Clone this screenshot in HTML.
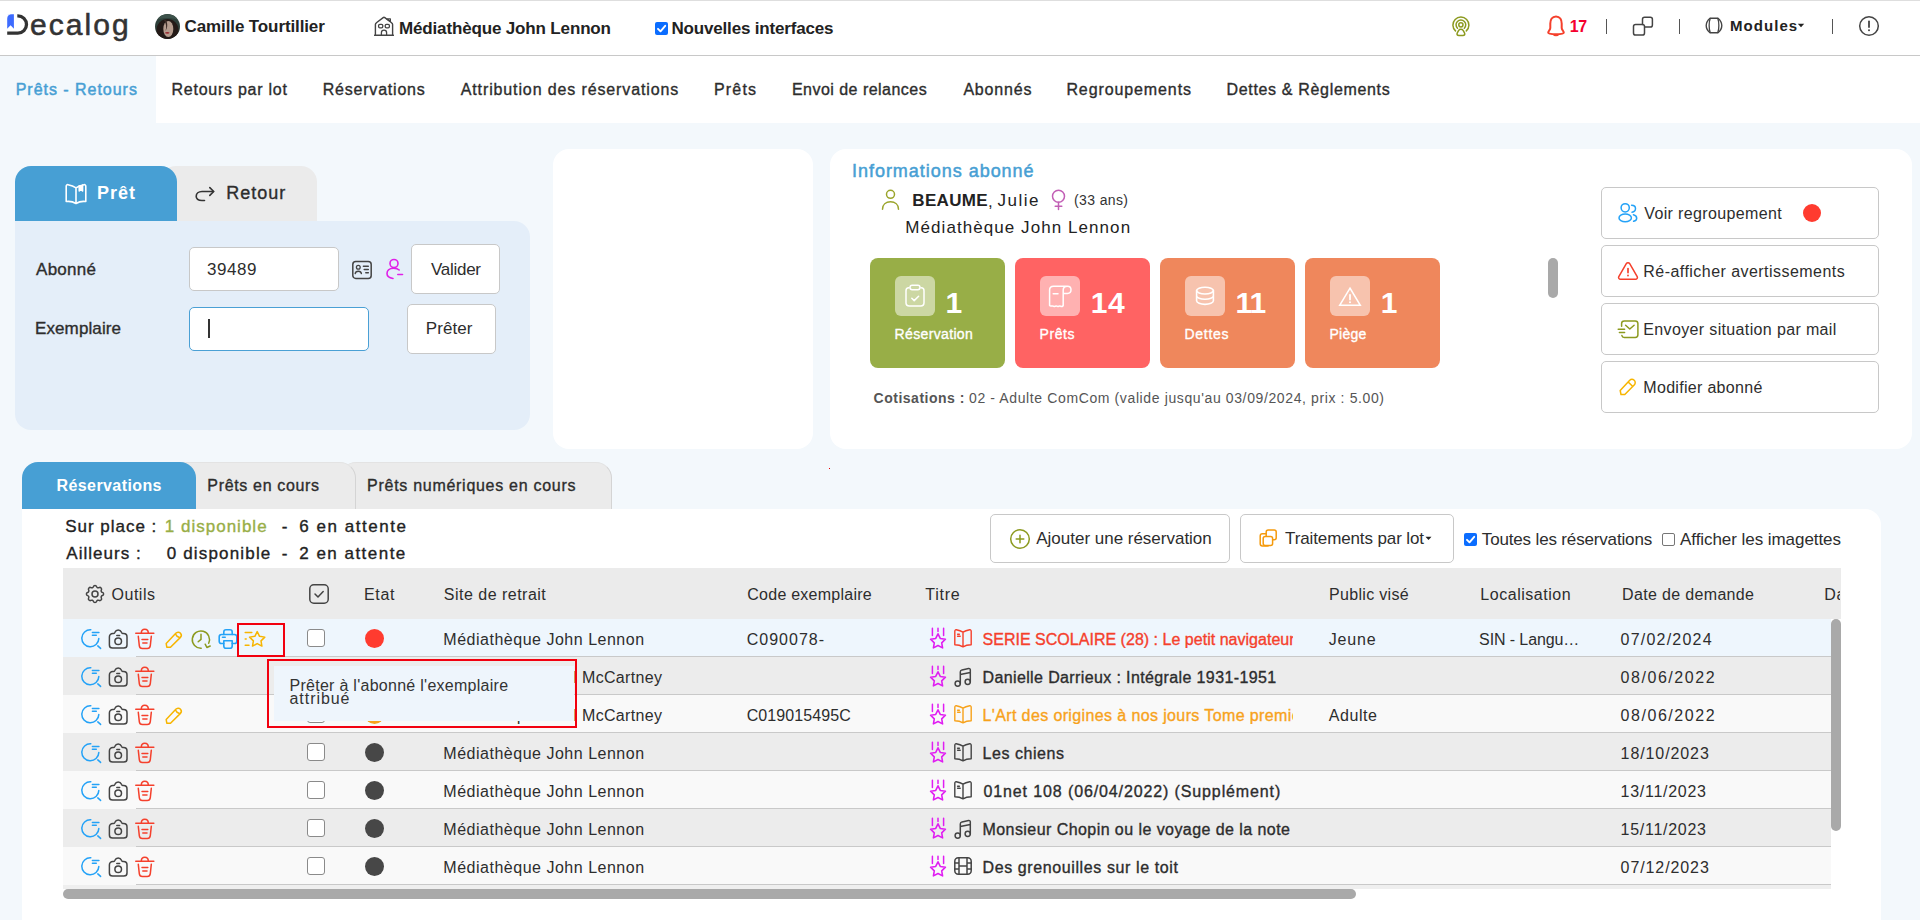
<!DOCTYPE html>
<html><head><meta charset="utf-8"><title>Decalog</title>
<style>
html,body{margin:0;padding:0;}
body{width:1920px;height:920px;overflow:hidden;position:relative;background:#f3f8fc;font-family:"Liberation Sans",sans-serif;}
.t{position:absolute;white-space:pre;}
.r{position:absolute;box-sizing:border-box;}
</style></head><body>
<div class='r' style='left:0px;top:0px;width:1920px;height:56px;background:#fff;z-index:1;'></div>
<div class='r' style='left:0px;top:0px;width:1920px;height:1px;background:#dedede;z-index:2;'></div>
<div class='r' style='left:0px;top:55px;width:1920px;height:1px;background:#c8c8c8;z-index:2;'></div>
<svg class='r' style='left:0px;top:8px;z-index:3;' width='40' height='32' viewBox='0 8 40 32' fill='none' stroke-linecap='round' stroke-linejoin='round'><path d='M7.2 14.2 C9.5 14.6 11.8 14.2 13.9 14.2 V28.7 L10.6 25.2 L7.2 28.7 V19.5 C7.2 17 7.8 15 10 14.5 Z' fill='#3d6bff' stroke='none'/><path d='M17.3 15.8 H17.85 A8.65 8.65 0 0 1 17.85 33.1 H7.2' stroke='#333' stroke-width='3.3' stroke-linecap='butt'/></svg>
<svg class='r' style='left:155px;top:14px;z-index:3;' width='25' height='25' viewBox='0 0 25 25' fill='none' stroke-linecap='round' stroke-linejoin='round'><defs><clipPath id='av'><circle cx='12.5' cy='12.5' r='12.5'/></clipPath></defs><g clip-path='url(#av)'><rect width='25' height='25' fill='#2e3f3a'/><ellipse cx='12.5' cy='16' rx='11' ry='11' fill='#241a17'/><ellipse cx='13.3' cy='15' rx='5' ry='8' fill='#b59c8e'/><path d='M9 6 C11 9 12 13 10.5 17 C12.5 14 13 10 11 6 Z' fill='#3a2a24'/><ellipse cx='12.3' cy='18.8' rx='2.2' ry='0.9' fill='#9a2a30'/><path d='M0 4 C5 -1 20 -1 25 4 V7 C20 3 5 3 0 7 Z' fill='#3d524b'/></g></svg>
<svg class='r' style='left:374px;top:16px;z-index:3;' width='20' height='20' viewBox='0 0 20 20' fill='none' stroke-linecap='round' stroke-linejoin='round'><path d='M0.6 19.2 H19.4 M1.4 19.2 V8.6 C1.4 7.8 1.8 7.2 2.4 6.8 L9.2 1.6 C9.7 1.2 10.3 1.2 10.8 1.6 L17.6 6.8 C18.2 7.2 18.6 7.8 18.6 8.6 V19.2' stroke='#444' stroke-width='1.4'/><path d='M12.8 2.9 H16.4 V5.6 Z' stroke='#444' stroke-width='1.2'/><rect x='4.6' y='8.3' width='4.2' height='3.5' rx='1.3' stroke='#444' stroke-width='1.3'/><rect x='11.2' y='8.3' width='4.2' height='3.5' rx='1.3' stroke='#444' stroke-width='1.3'/><path d='M7.4 19.2 V16.8 A2.6 2.6 0 0 1 12.6 16.8 V19.2' stroke='#444' stroke-width='1.3'/></svg>
<div class='r' style='left:655px;top:22px;width:13px;height:13px;background:#0b6dff;z-index:2;border-radius:2px'></div>
<svg class='r' style='left:655px;top:22px;z-index:3;' width='13' height='13' viewBox='0 0 13 13' fill='none' stroke-linecap='round' stroke-linejoin='round'><path d='M3 6.8 L5.5 9.3 L10.2 3.8' stroke='#fff' stroke-width='1.9'/></svg>
<svg class='r' style='left:1450px;top:15px;z-index:3;' width='22' height='22' viewBox='0 0 22 22' fill='none' stroke-linecap='round' stroke-linejoin='round'><circle cx='10.9' cy='9.8' r='2.1' stroke='#8c9a1f' stroke-width='1.5'/><path d='M7.5 13.3 A4.85 4.85 0 1 1 14.3 13.3' stroke='#8c9a1f' stroke-width='1.5'/><path d='M5.5 15.9 A8 8 0 1 1 16.3 15.9' stroke='#8c9a1f' stroke-width='1.5'/><path d='M8.7 15.3 C9.6 13.9 12.2 13.9 13.1 15.3 L14.5 17.9 C15.3 19.4 14.5 20.5 12.9 20.5 H8.9 C7.3 20.5 6.5 19.4 7.3 17.9 Z' stroke='#8c9a1f' stroke-width='1.5'/></svg>
<svg class='r' style='left:1546px;top:15px;z-index:3;' width='20' height='22' viewBox='0 0 20 22' fill='none' stroke-linecap='round' stroke-linejoin='round'><path d='M10 1.5 C6 1.5 4.3 5 4.3 8.5 V13 C4.3 15 2.2 16 2.2 17.5 C2.2 18.7 5 19.3 10 19.3 C15 19.3 17.8 18.7 17.8 17.5 C17.8 16 15.7 15 15.7 13 V8.5 C15.7 5 14 1.5 10 1.5 Z' stroke='#f5402c' stroke-width='2'/><path d='M7.5 19.5 C8 21 12 21 12.5 19.5 Z' fill='#f5402c' stroke='#f5402c' stroke-width='1.2'/></svg>
<div class='r' style='left:1606px;top:19px;width:1.2px;height:15px;background:#555;z-index:2;'></div>
<svg class='r' style='left:1632px;top:16px;z-index:3;' width='22' height='20' viewBox='0 0 22 20' fill='none' stroke-linecap='round' stroke-linejoin='round'><path d='M10.5 8.5 V3.3 C10.5 2.1 11.4 1.2 12.6 1.2 H18.3 C19.5 1.2 20.4 2.1 20.4 3.3 V9 C20.4 10.2 19.5 11.1 18.3 11.1 H12.8' stroke='#444' stroke-width='1.5'/><path d='M1.5 17 V10.6 C1.5 9.4 2.4 8.5 3.6 8.5 H10.4 C11.6 8.5 12.5 9.4 12.5 10.6 V17 C12.5 18.2 11.6 19.1 10.4 19.1 H3.6 C2.4 19.1 1.5 18.2 1.5 17 Z' stroke='#444' stroke-width='1.5'/></svg>
<div class='r' style='left:1679px;top:19px;width:1.2px;height:15px;background:#555;z-index:2;'></div>
<svg class='r' style='left:1705px;top:17px;z-index:3;' width='18' height='17' viewBox='0 0 18 17' fill='none' stroke-linecap='round' stroke-linejoin='round'><path d='M5 1.2 H13 C15.8 3.5 16.8 5.8 16.8 8.5 C16.8 11.2 15.8 13.5 13 15.8 H5 C2.2 13.5 1.2 11.2 1.2 8.5 C1.2 5.8 2.2 3.5 5 1.2 Z' stroke='#444' stroke-width='1.4'/><path d='M5.2 1.5 C3.8 5 3.8 12 5.2 15.5 M12.8 1.5 C14.2 5 14.2 12 12.8 15.5' stroke='#444' stroke-width='1.3'/></svg>
<svg class='r' style='left:1797px;top:23px;z-index:3;' width='8' height='5' viewBox='0 0 8 5' fill='none' stroke-linecap='round' stroke-linejoin='round'><path d='M0.8 0.8 H7.2 L4 4.2 Z' fill='#222' stroke='none'/></svg>
<div class='r' style='left:1832px;top:19px;width:1.2px;height:15px;background:#555;z-index:2;'></div>
<svg class='r' style='left:1858px;top:15px;z-index:3;' width='22' height='22' viewBox='0 0 22 22' fill='none' stroke-linecap='round' stroke-linejoin='round'><circle cx='11' cy='11' r='9.3' stroke='#444' stroke-width='1.5'/><path d='M11 6.3 V12' stroke='#444' stroke-width='1.8'/><circle cx='11' cy='15.3' r='1' fill='#444' stroke='none'/></svg>
<div class='r' style='left:0px;top:56px;width:1920px;height:67px;background:#fff;z-index:1;'></div>
<div class='r' style='left:0px;top:56px;width:156px;height:67px;background:#f3f8fc;z-index:2;'></div>
<div class='r' style='left:160px;top:166px;width:157px;height:56px;background:#ebebeb;z-index:1;border-radius:16px 16px 0 0'></div>
<div class='r' style='left:15px;top:166px;width:162px;height:56px;background:#479fd4;z-index:2;border-radius:16px 16px 0 0'></div>
<div class='r' style='left:15px;top:221px;width:515px;height:209px;background:#e4eef9;z-index:2;border-radius:0 16px 16px 16px'></div>
<svg class='r' style='left:64px;top:183px;z-index:3;' width='24' height='22' viewBox='0 0 24 22' fill='none' stroke-linecap='round' stroke-linejoin='round'><path d='M12 20.5 C9 18.6 5.8 18 2.2 18.5 V3.2 C2.2 2.2 3 1.5 4 1.7 C6.8 2.2 9.5 3 12 4.8 C14.5 3 17.2 2.2 20 1.7 C21 1.5 21.8 2.2 21.8 3.2 V18.5 C18.2 18 15 18.6 12 20.5 Z M12 4.8 V20.5' stroke='#fff' stroke-width='1.6'/><path d='M15.2 2.8 V8 L16.9 6.6 L18.6 8 V2.1' stroke='#fff' stroke-width='1.5' fill='#fff'/></svg>
<svg class='r' style='left:194px;top:185px;z-index:3;' width='22' height='17' viewBox='0 0 22 17' fill='none' stroke-linecap='round' stroke-linejoin='round'><path d='M19.5 6.5 H8 C4.5 6.5 2.2 8.6 2.2 11.3 C2.2 14 4.5 15.5 8 15.5 H10.5' stroke='#333' stroke-width='1.6'/><path d='M15.8 2.6 L19.7 6.5 L15.8 10.4' stroke='#333' stroke-width='1.6'/></svg>
<div class='r' style='left:189px;top:247px;width:150px;height:44px;background:#fff;z-index:3;border:1px solid #c8c8c8;border-radius:5px'></div>
<svg class='r' style='left:351px;top:260px;z-index:3;' width='22' height='20' viewBox='0 0 22 20' fill='none' stroke-linecap='round' stroke-linejoin='round'><rect x='1.8' y='1.6' width='18.4' height='16.8' rx='3' stroke='#444' stroke-width='1.5'/><circle cx='7.3' cy='7.3' r='1.9' stroke='#444' stroke-width='1.3'/><path d='M4.2 13.6 C4.6 10.5 10 10.5 10.4 13.6' stroke='#444' stroke-width='1.4'/><path d='M12.4 6.3 H17.3 M13.2 9.5 H17.3 M14.8 12.8 H17.3' stroke='#444' stroke-width='1.5'/></svg>
<svg class='r' style='left:385px;top:258px;z-index:3;' width='20' height='22' viewBox='0 0 20 22' fill='none' stroke-linecap='round' stroke-linejoin='round'><circle cx='9' cy='5.5' r='4' stroke='#e020e8' stroke-width='1.6'/><path d='M14.2 12 C12.5 10.2 10 10.2 8.5 10.2 C4 10.2 2 13 2 15.6 C2 18.5 4.5 20 8 20.5' stroke='#e020e8' stroke-width='1.6'/><path d='M12.8 16.5 H17.5' stroke='#e020e8' stroke-width='1.6'/></svg>
<div class='r' style='left:411px;top:244px;width:89px;height:50px;background:#fff;z-index:3;border:1px solid #c8c8c8;border-radius:5px'></div>
<div class='r' style='left:189px;top:307px;width:180px;height:44px;background:#fff;z-index:3;border:1px solid #4aa0d5;border-radius:5px'></div>
<div class='r' style='left:208px;top:319px;width:1.5px;height:19px;background:#333;z-index:4;'></div>
<div class='r' style='left:407px;top:304px;width:89px;height:50px;background:#fff;z-index:3;border:1px solid #c8c8c8;border-radius:5px'></div>
<div class='r' style='left:553px;top:149px;width:260px;height:300px;background:#fff;z-index:1;border-radius:16px'></div>
<div class='r' style='left:830px;top:149px;width:1082px;height:300px;background:#fff;z-index:1;border-radius:16px'></div>
<svg class='r' style='left:880px;top:189px;z-index:3;' width='21' height='21' viewBox='0 0 21 21' fill='none' stroke-linecap='round' stroke-linejoin='round'><circle cx='10.5' cy='5.3' r='4' stroke='#9ba52c' stroke-width='1.5'/><path d='M2.5 20.2 C2.5 15.5 6 12.8 10.5 12.8 C15 12.8 18.5 15.5 18.5 20.2' stroke='#9ba52c' stroke-width='1.5'/></svg>
<svg class='r' style='left:1050px;top:189px;z-index:3;' width='18' height='22' viewBox='0 0 18 22' fill='none' stroke-linecap='round' stroke-linejoin='round'><circle cx='8.5' cy='7.2' r='6' stroke='#c25fb5' stroke-width='1.5'/><path d='M8.5 13.2 V20.5 M5.2 17.3 H11.8' stroke='#c25fb5' stroke-width='1.5'/></svg>
<div class='r' style='left:870px;top:258px;width:135px;height:110px;background:#98ae47;z-index:2;border-radius:8px'></div>
<div class='r' style='left:895px;top:276px;width:40px;height:40px;background:rgba(255,255,255,0.5);z-index:3;border-radius:6px'></div>
<div class='r' style='left:1015px;top:258px;width:135px;height:110px;background:#ff6363;z-index:2;border-radius:8px'></div>
<div class='r' style='left:1040px;top:276px;width:40px;height:40px;background:rgba(255,255,255,0.5);z-index:3;border-radius:6px'></div>
<div class='r' style='left:1160px;top:258px;width:135px;height:110px;background:#ef875c;z-index:2;border-radius:8px'></div>
<div class='r' style='left:1185px;top:276px;width:40px;height:40px;background:rgba(255,255,255,0.5);z-index:3;border-radius:6px'></div>
<div class='r' style='left:1305px;top:258px;width:135px;height:110px;background:#ef875c;z-index:2;border-radius:8px'></div>
<div class='r' style='left:1330px;top:276px;width:40px;height:40px;background:rgba(255,255,255,0.5);z-index:3;border-radius:6px'></div>
<svg class='r' style='left:895px;top:276px;z-index:4;' width='40' height='40' viewBox='0 0 40 40' fill='none' stroke-linecap='round' stroke-linejoin='round'><path d='M14 11.8 H13.8 C12 11.8 11 13 11 14.8 V26.8 C11 28.8 12.3 30 14.3 30 H25.7 C27.7 30 29 28.8 29 26.8 V14.8 C29 13 28 11.8 26.2 11.8 H26' stroke='#fff' stroke-width='1.5'/><rect x='15' y='9.2' width='10' height='4.6' rx='2.2' stroke='#fff' stroke-width='1.5'/><path d='M16.8 22.2 L19.2 24.6 L23.6 20.2' stroke='#fff' stroke-width='1.5'/></svg>
<svg class='r' style='left:1040px;top:276px;z-index:4;' width='40' height='40' viewBox='0 0 40 40' fill='none' stroke-linecap='round' stroke-linejoin='round'><path d='M27.5 10.2 H13.5 C11.2 10.2 9.6 11.8 9.6 14 V29.6 C10.8 31 12 29.2 13.2 30.2 C14.4 31.2 15.6 29.4 16.9 30.2 C18.1 31.2 19.3 29.4 20.5 30.2 C21.5 31 22.6 30.2 23.2 29.6 V14 C23.2 11.8 24.8 10.2 27.5 10.2 C29.6 10.2 31 11.6 31 13.8 C31 16 29.6 17.4 27.5 17.4 H23.2' stroke='#fff' stroke-width='1.5'/><path d='M13.2 17.8 H18' stroke='#fff' stroke-width='1.5'/></svg>
<svg class='r' style='left:1185px;top:276px;z-index:4;' width='40' height='40' viewBox='0 0 40 40' fill='none' stroke-linecap='round' stroke-linejoin='round'><ellipse cx='20' cy='14.6' rx='8.4' ry='3.4' stroke='#fff' stroke-width='1.6'/><path d='M11.6 14.6 V24.8 C11.6 26.8 15.4 28.4 20 28.4 C24.6 28.4 28.4 26.8 28.4 24.8 V14.6 M11.6 19.7 C11.6 21.7 15.4 23.3 20 23.3 C24.6 23.3 28.4 21.7 28.4 19.7' stroke='#fff' stroke-width='1.6'/></svg>
<svg class='r' style='left:1330px;top:276px;z-index:4;' width='40' height='40' viewBox='0 0 40 40' fill='none' stroke-linecap='round' stroke-linejoin='round'><path d='M20 12.2 L30.2 29.2 H9.8 Z' stroke='#fff' stroke-width='1.6' stroke-linejoin='miter'/><path d='M20 19 V23.5' stroke='#fff' stroke-width='1.8'/><circle cx='20' cy='26.3' r='1' fill='#fff' stroke='none'/></svg>
<div class='r' style='left:1548px;top:258px;width:10px;height:40px;background:#a9a9a9;z-index:2;border-radius:5px'></div>
<div class='r' style='left:1601px;top:187px;width:278px;height:52px;background:#fff;z-index:2;border:1px solid #c8c8c8;border-radius:5px'></div>
<div class='r' style='left:1601px;top:245px;width:278px;height:52px;background:#fff;z-index:2;border:1px solid #c8c8c8;border-radius:5px'></div>
<div class='r' style='left:1601px;top:303px;width:278px;height:52px;background:#fff;z-index:2;border:1px solid #c8c8c8;border-radius:5px'></div>
<div class='r' style='left:1601px;top:361px;width:278px;height:52px;background:#fff;z-index:2;border:1px solid #c8c8c8;border-radius:5px'></div>
<div class='r' style='left:1803px;top:204px;width:18px;height:18px;background:#ff3b2f;z-index:3;border-radius:50%'></div>
<svg class='r' style='left:1617px;top:198px;z-index:3;' width='22' height='26' viewBox='0 0 22 26' fill='none' stroke-linecap='round' stroke-linejoin='round'><circle cx='8.2' cy='9.8' r='4.1' stroke='#24a2f7' stroke-width='1.5'/><ellipse cx='8.2' cy='19.9' rx='6.2' ry='3.8' stroke='#24a2f7' stroke-width='1.5'/><path d='M14.6 7.3 C17 7.3 18.5 8.6 18.5 10.6 C18.5 12.6 17 14 15 14.2 M16.4 16.8 C18.5 17.4 19.7 18.6 19.7 20.2 C19.7 21.8 18.5 22.8 16.6 23.3' stroke='#24a2f7' stroke-width='1.5'/></svg>
<svg class='r' style='left:1617px;top:261px;z-index:3;' width='22' height='20' viewBox='0 0 22 20' fill='none' stroke-linecap='round' stroke-linejoin='round'><path d='M9.3 2.6 C10 1.4 12 1.4 12.7 2.6 L20.2 15.6 C20.9 16.9 20 18.3 18.5 18.3 H3.5 C2 18.3 1.1 16.9 1.8 15.6 Z' stroke='#f5402c' stroke-width='1.5'/><path d='M11 7.5 V11.6' stroke='#f5402c' stroke-width='1.7'/><circle cx='11' cy='14.5' r='0.9' fill='#f5402c' stroke='none'/></svg>
<svg class='r' style='left:1617px;top:319px;z-index:3;' width='22' height='20' viewBox='0 0 22 20' fill='none' stroke-linecap='round' stroke-linejoin='round'><path d='M4.6 7.2 V4.6 C4.6 2.9 5.6 1.9 7.3 1.9 H18.2 C19.9 1.9 20.9 2.9 20.9 4.6 V15.7 C20.9 17.4 19.9 18.4 18.2 18.4 H7.3 C6 18.4 5.1 17.7 4.9 16.6' stroke='#8c9a1f' stroke-width='1.5'/><path d='M8.6 6.3 L12.8 10 L17.1 6.3' stroke='#8c9a1f' stroke-width='1.5'/><path d='M1.2 10.2 H7.6 M2.4 13.6 H7.6' stroke='#8c9a1f' stroke-width='1.5'/></svg>
<svg class='r' style='left:1618px;top:377px;z-index:3;' width='20' height='19' viewBox='0 0 20 19' fill='none' stroke-linecap='round' stroke-linejoin='round'><path d='M3 17.5 L2.2 13.5 L11.5 3.5 C12.8 2.2 14.8 2 16.2 3.3 C17.6 4.6 17.5 6.7 16.2 8 L6.8 17.5 Z M10.2 5 L14.8 9.5' stroke='#f7b500' stroke-width='1.5'/></svg>
<div class='r' style='left:340px;top:462px;width:272px;height:48px;background:#ebebeb;z-index:1;border-radius:16px 16px 0 0;border-right:1px solid #d4d4d4;border-top:1px solid #e3e3e3'></div>
<div class='r' style='left:180px;top:462px;width:176px;height:48px;background:#ebebeb;z-index:2;border-radius:0 16px 0 0;border-right:1px solid #d4d4d4;border-top:1px solid #e3e3e3'></div>
<div class='r' style='left:22px;top:462px;width:174px;height:48px;background:#479fd4;z-index:3;border-radius:16px 16px 0 0'></div>
<div class='r' style='left:22px;top:509px;width:1859px;height:411px;background:#fff;z-index:5;border-radius:0 16px 0 0'></div>
<div class='r' style='left:990px;top:514px;width:240px;height:49px;background:#fff;z-index:6;border:1px solid #c8c8c8;border-radius:5px'></div>
<svg class='r' style='left:1009px;top:528px;z-index:7;' width='22' height='22' viewBox='0 0 22 22' fill='none' stroke-linecap='round' stroke-linejoin='round'><circle cx='11' cy='11' r='9.3' stroke='#8c9a1f' stroke-width='1.5'/><path d='M11 7.2 V14.8 M7.2 11 H14.8' stroke='#8c9a1f' stroke-width='1.5'/></svg>
<div class='r' style='left:1240px;top:514px;width:214px;height:49px;background:#fff;z-index:6;border:1px solid #c8c8c8;border-radius:5px'></div>
<svg class='r' style='left:1259px;top:529px;z-index:7;' width='19' height='18' viewBox='0 0 19 18' fill='none' stroke-linecap='round' stroke-linejoin='round'><rect x='7.2' y='1' width='10' height='9.8' rx='2' stroke='#f59a0c' stroke-width='1.5'/><path d='M7.2 4.8 H3.4 C2.2 4.8 1.2 5.8 1.2 7 V14.8 C1.2 16 2.2 17 3.4 17 H8.2 C9.4 17 10.4 16 10.4 14.8 V10.8' stroke='#f59a0c' stroke-width='1.5'/><rect x='4.2' y='7.6' width='9.4' height='9' rx='2' stroke='#f59a0c' stroke-width='1.5' fill='#fff'/></svg>
<svg class='r' style='left:1425px;top:536px;z-index:7;' width='7' height='5' viewBox='0 0 7 5' fill='none' stroke-linecap='round' stroke-linejoin='round'><path d='M0.5 0.8 H6.5 L3.5 4 Z' fill='#222' stroke='none'/></svg>
<div class='r' style='left:1464px;top:533px;width:13px;height:13px;background:#0b6dff;z-index:7;border-radius:2px'></div>
<svg class='r' style='left:1464px;top:533px;z-index:8;' width='13' height='13' viewBox='0 0 13 13' fill='none' stroke-linecap='round' stroke-linejoin='round'><path d='M3 6.8 L5.5 9.3 L10.2 3.8' stroke='#fff' stroke-width='1.9'/></svg>
<div class='r' style='left:1662px;top:533px;width:13px;height:13px;background:#fff;z-index:7;border:1px solid #767676;border-radius:2px'></div>
<div class='r' style='left:63px;top:568px;width:1778px;height:51px;background:#ebebeb;z-index:6;'></div>
<svg class='r' style='left:84px;top:584px;z-index:7;' width='22' height='22' viewBox='0 0 22 22' fill='none' stroke-linecap='round' stroke-linejoin='round'><path d='M9.4 2.6 C9.8 1 12.2 1 12.6 2.6 C12.9 3.7 14.1 4.2 15.1 3.6 C16.5 2.8 18.2 4.5 17.4 5.9 C16.8 6.9 17.3 8.1 18.4 8.4 C20 8.8 20 11.2 18.4 11.6 C17.3 11.9 16.8 13.1 17.4 14.1 C18.2 15.5 16.5 17.2 15.1 16.4 C14.1 15.8 12.9 16.3 12.6 17.4 C12.2 19 9.8 19 9.4 17.4 C9.1 16.3 7.9 15.8 6.9 16.4 C5.5 17.2 3.8 15.5 4.6 14.1 C5.2 13.1 4.7 11.9 3.6 11.6 C2 11.2 2 8.8 3.6 8.4 C4.7 8.1 5.2 6.9 4.6 5.9 C3.8 4.5 5.5 2.8 6.9 3.6 C7.9 4.2 9.1 3.7 9.4 2.6 Z' stroke='#444' stroke-width='1.5'/><circle cx='11' cy='10' r='3' stroke='#444' stroke-width='1.5'/></svg>
<svg class='r' style='left:308px;top:583px;z-index:7;' width='22' height='22' viewBox='0 0 22 22' fill='none' stroke-linecap='round' stroke-linejoin='round'><rect x='1.8' y='1.8' width='18.4' height='18.4' rx='4' stroke='#444' stroke-width='1.5'/><path d='M7 11 L10 14 L15.2 8.5' stroke='#444' stroke-width='1.5'/></svg>
<div class='r' style='left:63px;top:619px;width:1768px;height:38px;background:#eef6fd;z-index:6;'></div>
<div class='r' style='left:136px;top:656px;width:1695px;height:1px;background:#c9c9c9;z-index:7;'></div>
<div class='r' style='left:63px;top:657px;width:1768px;height:38px;background:#ececec;z-index:6;'></div>
<div class='r' style='left:136px;top:694px;width:1695px;height:1px;background:#c9c9c9;z-index:7;'></div>
<div class='r' style='left:63px;top:695px;width:1768px;height:38px;background:#f9f9f9;z-index:6;'></div>
<div class='r' style='left:136px;top:732px;width:1695px;height:1px;background:#c9c9c9;z-index:7;'></div>
<div class='r' style='left:63px;top:733px;width:1768px;height:38px;background:#ececec;z-index:6;'></div>
<div class='r' style='left:136px;top:770px;width:1695px;height:1px;background:#c9c9c9;z-index:7;'></div>
<div class='r' style='left:63px;top:771px;width:1768px;height:38px;background:#f9f9f9;z-index:6;'></div>
<div class='r' style='left:136px;top:808px;width:1695px;height:1px;background:#c9c9c9;z-index:7;'></div>
<div class='r' style='left:63px;top:809px;width:1768px;height:38px;background:#ececec;z-index:6;'></div>
<div class='r' style='left:136px;top:846px;width:1695px;height:1px;background:#c9c9c9;z-index:7;'></div>
<div class='r' style='left:63px;top:847px;width:1768px;height:38px;background:#f9f9f9;z-index:6;'></div>
<div class='r' style='left:136px;top:884px;width:1695px;height:1px;background:#c9c9c9;z-index:7;'></div>
<div class='r' style='left:63px;top:885px;width:1768px;height:4px;background:#efefef;z-index:6;'></div>
<div class='r' style='left:1831px;top:619px;width:10px;height:212px;background:#a9a9a9;z-index:7;border-radius:5px'></div>
<div class='r' style='left:63px;top:889px;width:1293px;height:10px;background:#a9a9a9;z-index:7;border-radius:5px'></div>
<svg class='r' style='left:79px;top:629px;z-index:8;' width='24' height='22' viewBox='0 0 24 22' fill='none' stroke-linecap='round' stroke-linejoin='round'><path d='M11.8 0.8 A8.5 8.5 0 1 0 19.8 9.6' stroke='#24a2f7' stroke-width='1.5'/><path d='M13.4 3.6 H19.9 M13.4 6.3 H17.3 M18.8 16.9 L21.6 19.4' stroke='#24a2f7' stroke-width='1.5'/></svg>
<svg class='r' style='left:107px;top:628px;z-index:8;' width='22' height='22' viewBox='0 0 22 22' fill='none' stroke-linecap='round' stroke-linejoin='round'><path d='M2.4 9 C2.4 6.8 3.8 5.6 5.8 5.6 H6.4 C7.1 5.6 7.5 5.1 7.9 4.3 C8.6 2.6 9.6 1.9 11.2 1.9 C12.8 1.9 13.8 2.6 14.5 4.3 C14.9 5.1 15.3 5.6 16 5.6 H16.6 C18.6 5.6 20 6.8 20 9 V17 C20 19 18.8 20.1 16.8 20.1 H5.6 C3.6 20.1 2.4 19 2.4 17 Z' stroke='#444' stroke-width='1.5'/><circle cx='11.2' cy='13.3' r='3.3' stroke='#444' stroke-width='1.5'/><path d='M9.8 7.4 H12.6' stroke='#444' stroke-width='1.5'/></svg>
<svg class='r' style='left:134px;top:628px;z-index:8;' width='22' height='22' viewBox='0 0 22 22' fill='none' stroke-linecap='round' stroke-linejoin='round'><path d='M1.8 5.3 H19.8' stroke='#f5402c' stroke-width='1.6'/><path d='M7.3 5.2 C7.3 2.8 8.5 1.3 10.8 1.3 C13.1 1.3 14.3 2.8 14.3 5.2' stroke='#f5402c' stroke-width='1.5'/><path d='M4.3 8.3 L5.3 17.6 C5.5 19.4 6.6 20.5 8.4 20.5 H13.2 C15 20.5 16.1 19.4 16.3 17.6 L17.3 8.3' stroke='#f5402c' stroke-width='1.5'/><path d='M8 11.4 H13.8 M8.8 15 H13' stroke='#f5402c' stroke-width='1.5'/></svg>
<svg class='r' style='left:164px;top:629px;z-index:8;' width='20' height='20' viewBox='0 0 20 20' fill='none' stroke-linecap='round' stroke-linejoin='round'><path d='M2.8 18.2 L2.2 14.6 L11.8 4.3 C13 3 15 2.8 16.3 4 C17.6 5.3 17.5 7.3 16.2 8.6 L6.5 18.3 Z M11.5 5 C12 6.5 13.5 7.8 15.4 8.5' stroke='#f7b500' stroke-width='1.5'/></svg>
<svg class='r' style='left:190px;top:629px;z-index:8;' width='22' height='22' viewBox='0 0 22 22' fill='none' stroke-linecap='round' stroke-linejoin='round'><path d='M11.2 19.2 A8.6 8.6 0 1 1 18.7 14.2' stroke='#8c9a1f' stroke-width='1.5'/><path d='M11 5.3 V10.4 L8.2 12.8' stroke='#8c9a1f' stroke-width='1.5'/><path d='M15.2 15.2 L16.9 18.5 L20.2 17' stroke='#8c9a1f' stroke-width='1.5'/></svg>
<svg class='r' style='left:218px;top:628px;z-index:8;' width='20' height='22' viewBox='0 0 20 22' fill='none' stroke-linecap='round' stroke-linejoin='round'><path d='M14.2 15.5 H16.5 C17.9 15.5 18.8 14.6 18.8 13.2 V8.8 C18.8 7.4 17.9 6.5 16.5 6.5 H3.5 C2.1 6.5 1.2 7.4 1.2 8.8 V13.2 C1.2 14.6 2.1 15.5 3.5 15.5 H5.8' stroke='#24a2f7' stroke-width='1.6'/><path d='M5.8 6.5 V4 C5.8 2.5 6.5 1.8 8 1.8 H12 C13.5 1.8 14.2 2.5 14.2 4 V6.5' stroke='#24a2f7' stroke-width='1.6'/><path d='M5.8 12.8 H14.2 V18 C14.2 19.5 13.5 20.3 12 20.3 H8 C6.5 20.3 5.8 19.5 5.8 18 Z' stroke='#24a2f7' stroke-width='1.6'/><path d='M4.5 9.3 H7.2' stroke='#24a2f7' stroke-width='1.6'/></svg>
<svg class='r' style='left:243px;top:629px;z-index:8;' width='24' height='20' viewBox='0 0 24 20' fill='none' stroke-linecap='round' stroke-linejoin='round'><path d='M14.20 2.60 L16.55 7.36 L21.81 8.13 L18.00 11.84 L18.90 17.07 L14.20 14.60 L9.50 17.07 L10.40 11.84 L6.59 8.13 L11.85 7.36 Z' stroke='#f7b500' stroke-width='1.5'/><path d='M2.2 3.5 H8.8 M2.2 10 H3.2 M2.2 16.3 H6' stroke='#f7b500' stroke-width='1.5'/></svg>
<div class='r' style='left:237px;top:623px;width:48px;height:34px;background:none;z-index:9;border:2px solid #f2000f'></div>
<div class='r' style='left:307px;top:629px;width:18px;height:18px;background:#fff;z-index:8;border:1px solid #8a8a8a;border-radius:3px'></div>
<div class='r' style='left:364.5px;top:628.5px;width:19px;height:19px;background:#ff3b2f;z-index:8;border-radius:50%'></div>
<svg class='r' style='left:929px;top:627px;z-index:8;' width='18' height='22' viewBox='0 0 18 22' fill='none' stroke-linecap='round' stroke-linejoin='round'><path d='M9.00 6.80 L11.29 11.44 L16.42 12.19 L12.71 15.81 L13.58 20.91 L9.00 18.50 L4.42 20.91 L5.29 15.81 L1.58 12.19 L6.71 11.44 Z' stroke='#e01ef2' stroke-width='1.6'/><path d='M3.4 1.3 V8.6 M9 1.3 V4.6 M14.6 1.3 V8.6' stroke='#e01ef2' stroke-width='1.5'/></svg>
<svg class='r' style='left:953px;top:628px;z-index:8;' width='20' height='20' viewBox='0 0 20 20' fill='none' stroke-linecap='round' stroke-linejoin='round'><path d='M10 18.8 C8 17.6 5.3 16.8 1.8 16.8 V3.2 C1.8 2.4 2.4 1.6 3.3 1.8 C5.8 2.3 8 3 10 4.2 C12 3 14.2 2.3 16.7 1.8 C17.6 1.6 18.2 2.4 18.2 3.2 V16.8 C14.7 16.8 12 17.6 10 18.8 Z M10 4.2 V18.5' stroke='#f5402c' stroke-width='1.4'/><path d='M4.6 6.2 H6.4 M4.6 8.3 H7.2' stroke='#f5402c' stroke-width='1.4'/></svg>
<svg class='r' style='left:79px;top:667px;z-index:8;' width='24' height='22' viewBox='0 0 24 22' fill='none' stroke-linecap='round' stroke-linejoin='round'><path d='M11.8 0.8 A8.5 8.5 0 1 0 19.8 9.6' stroke='#24a2f7' stroke-width='1.5'/><path d='M13.4 3.6 H19.9 M13.4 6.3 H17.3 M18.8 16.9 L21.6 19.4' stroke='#24a2f7' stroke-width='1.5'/></svg>
<svg class='r' style='left:107px;top:666px;z-index:8;' width='22' height='22' viewBox='0 0 22 22' fill='none' stroke-linecap='round' stroke-linejoin='round'><path d='M2.4 9 C2.4 6.8 3.8 5.6 5.8 5.6 H6.4 C7.1 5.6 7.5 5.1 7.9 4.3 C8.6 2.6 9.6 1.9 11.2 1.9 C12.8 1.9 13.8 2.6 14.5 4.3 C14.9 5.1 15.3 5.6 16 5.6 H16.6 C18.6 5.6 20 6.8 20 9 V17 C20 19 18.8 20.1 16.8 20.1 H5.6 C3.6 20.1 2.4 19 2.4 17 Z' stroke='#444' stroke-width='1.5'/><circle cx='11.2' cy='13.3' r='3.3' stroke='#444' stroke-width='1.5'/><path d='M9.8 7.4 H12.6' stroke='#444' stroke-width='1.5'/></svg>
<svg class='r' style='left:134px;top:666px;z-index:8;' width='22' height='22' viewBox='0 0 22 22' fill='none' stroke-linecap='round' stroke-linejoin='round'><path d='M1.8 5.3 H19.8' stroke='#f5402c' stroke-width='1.6'/><path d='M7.3 5.2 C7.3 2.8 8.5 1.3 10.8 1.3 C13.1 1.3 14.3 2.8 14.3 5.2' stroke='#f5402c' stroke-width='1.5'/><path d='M4.3 8.3 L5.3 17.6 C5.5 19.4 6.6 20.5 8.4 20.5 H13.2 C15 20.5 16.1 19.4 16.3 17.6 L17.3 8.3' stroke='#f5402c' stroke-width='1.5'/><path d='M8 11.4 H13.8 M8.8 15 H13' stroke='#f5402c' stroke-width='1.5'/></svg>
<div class='r' style='left:307px;top:667px;width:18px;height:18px;background:#fff;z-index:8;border:1px solid #8a8a8a;border-radius:3px'></div>
<div class='r' style='left:364.5px;top:666.5px;width:19px;height:19px;background:#f7a21b;z-index:8;border-radius:50%'></div>
<svg class='r' style='left:929px;top:665px;z-index:8;' width='18' height='22' viewBox='0 0 18 22' fill='none' stroke-linecap='round' stroke-linejoin='round'><path d='M9.00 6.80 L11.29 11.44 L16.42 12.19 L12.71 15.81 L13.58 20.91 L9.00 18.50 L4.42 20.91 L5.29 15.81 L1.58 12.19 L6.71 11.44 Z' stroke='#e01ef2' stroke-width='1.6'/><path d='M3.4 1.3 V8.6 M9 1.3 V4.6 M14.6 1.3 V8.6' stroke='#e01ef2' stroke-width='1.5'/></svg>
<svg class='r' style='left:954px;top:667px;z-index:8;' width='18' height='20' viewBox='0 0 18 20' fill='none' stroke-linecap='round' stroke-linejoin='round'><circle cx='3.7' cy='16.6' r='2.6' stroke='#444' stroke-width='1.5'/><circle cx='13.7' cy='14.8' r='2.6' stroke='#444' stroke-width='1.5'/><path d='M6.3 16.6 V5 C6.3 3.8 6.9 3.2 8 2.9 L14.6 1.5 C15.6 1.3 16.3 1.9 16.3 2.8 V14.8 M6.3 7.6 L16.3 5.5' stroke='#444' stroke-width='1.5'/></svg>
<svg class='r' style='left:79px;top:705px;z-index:8;' width='24' height='22' viewBox='0 0 24 22' fill='none' stroke-linecap='round' stroke-linejoin='round'><path d='M11.8 0.8 A8.5 8.5 0 1 0 19.8 9.6' stroke='#24a2f7' stroke-width='1.5'/><path d='M13.4 3.6 H19.9 M13.4 6.3 H17.3 M18.8 16.9 L21.6 19.4' stroke='#24a2f7' stroke-width='1.5'/></svg>
<svg class='r' style='left:107px;top:704px;z-index:8;' width='22' height='22' viewBox='0 0 22 22' fill='none' stroke-linecap='round' stroke-linejoin='round'><path d='M2.4 9 C2.4 6.8 3.8 5.6 5.8 5.6 H6.4 C7.1 5.6 7.5 5.1 7.9 4.3 C8.6 2.6 9.6 1.9 11.2 1.9 C12.8 1.9 13.8 2.6 14.5 4.3 C14.9 5.1 15.3 5.6 16 5.6 H16.6 C18.6 5.6 20 6.8 20 9 V17 C20 19 18.8 20.1 16.8 20.1 H5.6 C3.6 20.1 2.4 19 2.4 17 Z' stroke='#444' stroke-width='1.5'/><circle cx='11.2' cy='13.3' r='3.3' stroke='#444' stroke-width='1.5'/><path d='M9.8 7.4 H12.6' stroke='#444' stroke-width='1.5'/></svg>
<svg class='r' style='left:134px;top:704px;z-index:8;' width='22' height='22' viewBox='0 0 22 22' fill='none' stroke-linecap='round' stroke-linejoin='round'><path d='M1.8 5.3 H19.8' stroke='#f5402c' stroke-width='1.6'/><path d='M7.3 5.2 C7.3 2.8 8.5 1.3 10.8 1.3 C13.1 1.3 14.3 2.8 14.3 5.2' stroke='#f5402c' stroke-width='1.5'/><path d='M4.3 8.3 L5.3 17.6 C5.5 19.4 6.6 20.5 8.4 20.5 H13.2 C15 20.5 16.1 19.4 16.3 17.6 L17.3 8.3' stroke='#f5402c' stroke-width='1.5'/><path d='M8 11.4 H13.8 M8.8 15 H13' stroke='#f5402c' stroke-width='1.5'/></svg>
<svg class='r' style='left:164px;top:705px;z-index:8;' width='20' height='20' viewBox='0 0 20 20' fill='none' stroke-linecap='round' stroke-linejoin='round'><path d='M2.8 18.2 L2.2 14.6 L11.8 4.3 C13 3 15 2.8 16.3 4 C17.6 5.3 17.5 7.3 16.2 8.6 L6.5 18.3 Z M11.5 5 C12 6.5 13.5 7.8 15.4 8.5' stroke='#f7b500' stroke-width='1.5'/></svg>
<div class='r' style='left:307px;top:705px;width:18px;height:18px;background:#fff;z-index:8;border:1px solid #8a8a8a;border-radius:3px'></div>
<div class='r' style='left:364.5px;top:704.5px;width:19px;height:19px;background:#f7a21b;z-index:8;border-radius:50%'></div>
<svg class='r' style='left:929px;top:703px;z-index:8;' width='18' height='22' viewBox='0 0 18 22' fill='none' stroke-linecap='round' stroke-linejoin='round'><path d='M9.00 6.80 L11.29 11.44 L16.42 12.19 L12.71 15.81 L13.58 20.91 L9.00 18.50 L4.42 20.91 L5.29 15.81 L1.58 12.19 L6.71 11.44 Z' stroke='#e01ef2' stroke-width='1.6'/><path d='M3.4 1.3 V8.6 M9 1.3 V4.6 M14.6 1.3 V8.6' stroke='#e01ef2' stroke-width='1.5'/></svg>
<svg class='r' style='left:953px;top:704px;z-index:8;' width='20' height='20' viewBox='0 0 20 20' fill='none' stroke-linecap='round' stroke-linejoin='round'><path d='M10 18.8 C8 17.6 5.3 16.8 1.8 16.8 V3.2 C1.8 2.4 2.4 1.6 3.3 1.8 C5.8 2.3 8 3 10 4.2 C12 3 14.2 2.3 16.7 1.8 C17.6 1.6 18.2 2.4 18.2 3.2 V16.8 C14.7 16.8 12 17.6 10 18.8 Z M10 4.2 V18.5' stroke='#f7a21b' stroke-width='1.4'/><path d='M4.6 6.2 H6.4 M4.6 8.3 H7.2' stroke='#f7a21b' stroke-width='1.4'/></svg>
<svg class='r' style='left:79px;top:743px;z-index:8;' width='24' height='22' viewBox='0 0 24 22' fill='none' stroke-linecap='round' stroke-linejoin='round'><path d='M11.8 0.8 A8.5 8.5 0 1 0 19.8 9.6' stroke='#24a2f7' stroke-width='1.5'/><path d='M13.4 3.6 H19.9 M13.4 6.3 H17.3 M18.8 16.9 L21.6 19.4' stroke='#24a2f7' stroke-width='1.5'/></svg>
<svg class='r' style='left:107px;top:742px;z-index:8;' width='22' height='22' viewBox='0 0 22 22' fill='none' stroke-linecap='round' stroke-linejoin='round'><path d='M2.4 9 C2.4 6.8 3.8 5.6 5.8 5.6 H6.4 C7.1 5.6 7.5 5.1 7.9 4.3 C8.6 2.6 9.6 1.9 11.2 1.9 C12.8 1.9 13.8 2.6 14.5 4.3 C14.9 5.1 15.3 5.6 16 5.6 H16.6 C18.6 5.6 20 6.8 20 9 V17 C20 19 18.8 20.1 16.8 20.1 H5.6 C3.6 20.1 2.4 19 2.4 17 Z' stroke='#444' stroke-width='1.5'/><circle cx='11.2' cy='13.3' r='3.3' stroke='#444' stroke-width='1.5'/><path d='M9.8 7.4 H12.6' stroke='#444' stroke-width='1.5'/></svg>
<svg class='r' style='left:134px;top:742px;z-index:8;' width='22' height='22' viewBox='0 0 22 22' fill='none' stroke-linecap='round' stroke-linejoin='round'><path d='M1.8 5.3 H19.8' stroke='#f5402c' stroke-width='1.6'/><path d='M7.3 5.2 C7.3 2.8 8.5 1.3 10.8 1.3 C13.1 1.3 14.3 2.8 14.3 5.2' stroke='#f5402c' stroke-width='1.5'/><path d='M4.3 8.3 L5.3 17.6 C5.5 19.4 6.6 20.5 8.4 20.5 H13.2 C15 20.5 16.1 19.4 16.3 17.6 L17.3 8.3' stroke='#f5402c' stroke-width='1.5'/><path d='M8 11.4 H13.8 M8.8 15 H13' stroke='#f5402c' stroke-width='1.5'/></svg>
<div class='r' style='left:307px;top:743px;width:18px;height:18px;background:#fff;z-index:8;border:1px solid #8a8a8a;border-radius:3px'></div>
<div class='r' style='left:364.5px;top:742.5px;width:19px;height:19px;background:#474747;z-index:8;border-radius:50%'></div>
<svg class='r' style='left:929px;top:741px;z-index:8;' width='18' height='22' viewBox='0 0 18 22' fill='none' stroke-linecap='round' stroke-linejoin='round'><path d='M9.00 6.80 L11.29 11.44 L16.42 12.19 L12.71 15.81 L13.58 20.91 L9.00 18.50 L4.42 20.91 L5.29 15.81 L1.58 12.19 L6.71 11.44 Z' stroke='#e01ef2' stroke-width='1.6'/><path d='M3.4 1.3 V8.6 M9 1.3 V4.6 M14.6 1.3 V8.6' stroke='#e01ef2' stroke-width='1.5'/></svg>
<svg class='r' style='left:953px;top:742px;z-index:8;' width='20' height='20' viewBox='0 0 20 20' fill='none' stroke-linecap='round' stroke-linejoin='round'><path d='M10 18.8 C8 17.6 5.3 16.8 1.8 16.8 V3.2 C1.8 2.4 2.4 1.6 3.3 1.8 C5.8 2.3 8 3 10 4.2 C12 3 14.2 2.3 16.7 1.8 C17.6 1.6 18.2 2.4 18.2 3.2 V16.8 C14.7 16.8 12 17.6 10 18.8 Z M10 4.2 V18.5' stroke='#444' stroke-width='1.4'/><path d='M4.6 6.2 H6.4 M4.6 8.3 H7.2' stroke='#444' stroke-width='1.4'/></svg>
<svg class='r' style='left:79px;top:781px;z-index:8;' width='24' height='22' viewBox='0 0 24 22' fill='none' stroke-linecap='round' stroke-linejoin='round'><path d='M11.8 0.8 A8.5 8.5 0 1 0 19.8 9.6' stroke='#24a2f7' stroke-width='1.5'/><path d='M13.4 3.6 H19.9 M13.4 6.3 H17.3 M18.8 16.9 L21.6 19.4' stroke='#24a2f7' stroke-width='1.5'/></svg>
<svg class='r' style='left:107px;top:780px;z-index:8;' width='22' height='22' viewBox='0 0 22 22' fill='none' stroke-linecap='round' stroke-linejoin='round'><path d='M2.4 9 C2.4 6.8 3.8 5.6 5.8 5.6 H6.4 C7.1 5.6 7.5 5.1 7.9 4.3 C8.6 2.6 9.6 1.9 11.2 1.9 C12.8 1.9 13.8 2.6 14.5 4.3 C14.9 5.1 15.3 5.6 16 5.6 H16.6 C18.6 5.6 20 6.8 20 9 V17 C20 19 18.8 20.1 16.8 20.1 H5.6 C3.6 20.1 2.4 19 2.4 17 Z' stroke='#444' stroke-width='1.5'/><circle cx='11.2' cy='13.3' r='3.3' stroke='#444' stroke-width='1.5'/><path d='M9.8 7.4 H12.6' stroke='#444' stroke-width='1.5'/></svg>
<svg class='r' style='left:134px;top:780px;z-index:8;' width='22' height='22' viewBox='0 0 22 22' fill='none' stroke-linecap='round' stroke-linejoin='round'><path d='M1.8 5.3 H19.8' stroke='#f5402c' stroke-width='1.6'/><path d='M7.3 5.2 C7.3 2.8 8.5 1.3 10.8 1.3 C13.1 1.3 14.3 2.8 14.3 5.2' stroke='#f5402c' stroke-width='1.5'/><path d='M4.3 8.3 L5.3 17.6 C5.5 19.4 6.6 20.5 8.4 20.5 H13.2 C15 20.5 16.1 19.4 16.3 17.6 L17.3 8.3' stroke='#f5402c' stroke-width='1.5'/><path d='M8 11.4 H13.8 M8.8 15 H13' stroke='#f5402c' stroke-width='1.5'/></svg>
<div class='r' style='left:307px;top:781px;width:18px;height:18px;background:#fff;z-index:8;border:1px solid #8a8a8a;border-radius:3px'></div>
<div class='r' style='left:364.5px;top:780.5px;width:19px;height:19px;background:#474747;z-index:8;border-radius:50%'></div>
<svg class='r' style='left:929px;top:779px;z-index:8;' width='18' height='22' viewBox='0 0 18 22' fill='none' stroke-linecap='round' stroke-linejoin='round'><path d='M9.00 6.80 L11.29 11.44 L16.42 12.19 L12.71 15.81 L13.58 20.91 L9.00 18.50 L4.42 20.91 L5.29 15.81 L1.58 12.19 L6.71 11.44 Z' stroke='#e01ef2' stroke-width='1.6'/><path d='M3.4 1.3 V8.6 M9 1.3 V4.6 M14.6 1.3 V8.6' stroke='#e01ef2' stroke-width='1.5'/></svg>
<svg class='r' style='left:953px;top:780px;z-index:8;' width='20' height='20' viewBox='0 0 20 20' fill='none' stroke-linecap='round' stroke-linejoin='round'><path d='M10 18.8 C8 17.6 5.3 16.8 1.8 16.8 V3.2 C1.8 2.4 2.4 1.6 3.3 1.8 C5.8 2.3 8 3 10 4.2 C12 3 14.2 2.3 16.7 1.8 C17.6 1.6 18.2 2.4 18.2 3.2 V16.8 C14.7 16.8 12 17.6 10 18.8 Z M10 4.2 V18.5' stroke='#444' stroke-width='1.4'/><path d='M4.6 6.2 H6.4 M4.6 8.3 H7.2' stroke='#444' stroke-width='1.4'/></svg>
<svg class='r' style='left:79px;top:819px;z-index:8;' width='24' height='22' viewBox='0 0 24 22' fill='none' stroke-linecap='round' stroke-linejoin='round'><path d='M11.8 0.8 A8.5 8.5 0 1 0 19.8 9.6' stroke='#24a2f7' stroke-width='1.5'/><path d='M13.4 3.6 H19.9 M13.4 6.3 H17.3 M18.8 16.9 L21.6 19.4' stroke='#24a2f7' stroke-width='1.5'/></svg>
<svg class='r' style='left:107px;top:818px;z-index:8;' width='22' height='22' viewBox='0 0 22 22' fill='none' stroke-linecap='round' stroke-linejoin='round'><path d='M2.4 9 C2.4 6.8 3.8 5.6 5.8 5.6 H6.4 C7.1 5.6 7.5 5.1 7.9 4.3 C8.6 2.6 9.6 1.9 11.2 1.9 C12.8 1.9 13.8 2.6 14.5 4.3 C14.9 5.1 15.3 5.6 16 5.6 H16.6 C18.6 5.6 20 6.8 20 9 V17 C20 19 18.8 20.1 16.8 20.1 H5.6 C3.6 20.1 2.4 19 2.4 17 Z' stroke='#444' stroke-width='1.5'/><circle cx='11.2' cy='13.3' r='3.3' stroke='#444' stroke-width='1.5'/><path d='M9.8 7.4 H12.6' stroke='#444' stroke-width='1.5'/></svg>
<svg class='r' style='left:134px;top:818px;z-index:8;' width='22' height='22' viewBox='0 0 22 22' fill='none' stroke-linecap='round' stroke-linejoin='round'><path d='M1.8 5.3 H19.8' stroke='#f5402c' stroke-width='1.6'/><path d='M7.3 5.2 C7.3 2.8 8.5 1.3 10.8 1.3 C13.1 1.3 14.3 2.8 14.3 5.2' stroke='#f5402c' stroke-width='1.5'/><path d='M4.3 8.3 L5.3 17.6 C5.5 19.4 6.6 20.5 8.4 20.5 H13.2 C15 20.5 16.1 19.4 16.3 17.6 L17.3 8.3' stroke='#f5402c' stroke-width='1.5'/><path d='M8 11.4 H13.8 M8.8 15 H13' stroke='#f5402c' stroke-width='1.5'/></svg>
<div class='r' style='left:307px;top:819px;width:18px;height:18px;background:#fff;z-index:8;border:1px solid #8a8a8a;border-radius:3px'></div>
<div class='r' style='left:364.5px;top:818.5px;width:19px;height:19px;background:#474747;z-index:8;border-radius:50%'></div>
<svg class='r' style='left:929px;top:817px;z-index:8;' width='18' height='22' viewBox='0 0 18 22' fill='none' stroke-linecap='round' stroke-linejoin='round'><path d='M9.00 6.80 L11.29 11.44 L16.42 12.19 L12.71 15.81 L13.58 20.91 L9.00 18.50 L4.42 20.91 L5.29 15.81 L1.58 12.19 L6.71 11.44 Z' stroke='#e01ef2' stroke-width='1.6'/><path d='M3.4 1.3 V8.6 M9 1.3 V4.6 M14.6 1.3 V8.6' stroke='#e01ef2' stroke-width='1.5'/></svg>
<svg class='r' style='left:954px;top:819px;z-index:8;' width='18' height='20' viewBox='0 0 18 20' fill='none' stroke-linecap='round' stroke-linejoin='round'><circle cx='3.7' cy='16.6' r='2.6' stroke='#444' stroke-width='1.5'/><circle cx='13.7' cy='14.8' r='2.6' stroke='#444' stroke-width='1.5'/><path d='M6.3 16.6 V5 C6.3 3.8 6.9 3.2 8 2.9 L14.6 1.5 C15.6 1.3 16.3 1.9 16.3 2.8 V14.8 M6.3 7.6 L16.3 5.5' stroke='#444' stroke-width='1.5'/></svg>
<svg class='r' style='left:79px;top:857px;z-index:8;' width='24' height='22' viewBox='0 0 24 22' fill='none' stroke-linecap='round' stroke-linejoin='round'><path d='M11.8 0.8 A8.5 8.5 0 1 0 19.8 9.6' stroke='#24a2f7' stroke-width='1.5'/><path d='M13.4 3.6 H19.9 M13.4 6.3 H17.3 M18.8 16.9 L21.6 19.4' stroke='#24a2f7' stroke-width='1.5'/></svg>
<svg class='r' style='left:107px;top:856px;z-index:8;' width='22' height='22' viewBox='0 0 22 22' fill='none' stroke-linecap='round' stroke-linejoin='round'><path d='M2.4 9 C2.4 6.8 3.8 5.6 5.8 5.6 H6.4 C7.1 5.6 7.5 5.1 7.9 4.3 C8.6 2.6 9.6 1.9 11.2 1.9 C12.8 1.9 13.8 2.6 14.5 4.3 C14.9 5.1 15.3 5.6 16 5.6 H16.6 C18.6 5.6 20 6.8 20 9 V17 C20 19 18.8 20.1 16.8 20.1 H5.6 C3.6 20.1 2.4 19 2.4 17 Z' stroke='#444' stroke-width='1.5'/><circle cx='11.2' cy='13.3' r='3.3' stroke='#444' stroke-width='1.5'/><path d='M9.8 7.4 H12.6' stroke='#444' stroke-width='1.5'/></svg>
<svg class='r' style='left:134px;top:856px;z-index:8;' width='22' height='22' viewBox='0 0 22 22' fill='none' stroke-linecap='round' stroke-linejoin='round'><path d='M1.8 5.3 H19.8' stroke='#f5402c' stroke-width='1.6'/><path d='M7.3 5.2 C7.3 2.8 8.5 1.3 10.8 1.3 C13.1 1.3 14.3 2.8 14.3 5.2' stroke='#f5402c' stroke-width='1.5'/><path d='M4.3 8.3 L5.3 17.6 C5.5 19.4 6.6 20.5 8.4 20.5 H13.2 C15 20.5 16.1 19.4 16.3 17.6 L17.3 8.3' stroke='#f5402c' stroke-width='1.5'/><path d='M8 11.4 H13.8 M8.8 15 H13' stroke='#f5402c' stroke-width='1.5'/></svg>
<div class='r' style='left:307px;top:857px;width:18px;height:18px;background:#fff;z-index:8;border:1px solid #8a8a8a;border-radius:3px'></div>
<div class='r' style='left:364.5px;top:856.5px;width:19px;height:19px;background:#474747;z-index:8;border-radius:50%'></div>
<svg class='r' style='left:929px;top:855px;z-index:8;' width='18' height='22' viewBox='0 0 18 22' fill='none' stroke-linecap='round' stroke-linejoin='round'><path d='M9.00 6.80 L11.29 11.44 L16.42 12.19 L12.71 15.81 L13.58 20.91 L9.00 18.50 L4.42 20.91 L5.29 15.81 L1.58 12.19 L6.71 11.44 Z' stroke='#e01ef2' stroke-width='1.6'/><path d='M3.4 1.3 V8.6 M9 1.3 V4.6 M14.6 1.3 V8.6' stroke='#e01ef2' stroke-width='1.5'/></svg>
<svg class='r' style='left:953px;top:856px;z-index:8;' width='20' height='20' viewBox='0 0 20 20' fill='none' stroke-linecap='round' stroke-linejoin='round'><rect x='1.8' y='1.8' width='16.4' height='16.4' rx='3.5' stroke='#444' stroke-width='1.5'/><path d='M6 1.8 V18.2 M14 1.8 V18.2 M1.8 7 H6 M1.8 13 H6 M14 7 H18.2 M14 13 H18.2 M6 10 H14' stroke='#444' stroke-width='1.5'/></svg>
<div class='r' style='left:267px;top:659px;width:310px;height:69px;background:none;z-index:20;border:2px solid #f2000f'></div>
<div class='r' style='left:274px;top:666px;width:300px;height:55px;background:#eef5fc;z-index:19;'></div>
<div class='r' style='left:829px;top:468px;width:1px;height:1px;background:#e00;z-index:2;'></div>

<div class='t' style='left:30px;top:10px;font-size:30.0px;line-height:30.0px;font-weight:400;letter-spacing:2.039px;color:#333;-webkit-text-stroke:0.35px currentColor;z-index:2;-webkit-text-stroke:0.55px #333;'>ecalog</div>
<div class='t' style='left:184.6px;top:18px;font-size:17.0px;line-height:17.0px;font-weight:700;letter-spacing:-0.118px;color:#222;z-index:2;'>Camille Tourtillier</div>
<div class='t' style='left:399px;top:20px;font-size:17.0px;line-height:17.0px;font-weight:700;letter-spacing:-0.152px;color:#222;z-index:2;'>Médiathèque John Lennon</div>
<div class='t' style='left:671.5px;top:20px;font-size:17.0px;line-height:17.0px;font-weight:700;letter-spacing:-0.176px;color:#222;z-index:2;'>Nouvelles interfaces</div>
<div class='t' style='left:1569.8px;top:19px;font-size:16.0px;line-height:16.0px;font-weight:700;letter-spacing:-0.397px;color:#f5002e;z-index:2;'>17</div>
<div class='t' style='left:1730px;top:18px;font-size:15.0px;line-height:15.0px;font-weight:700;letter-spacing:1.061px;color:#222;z-index:2;'>Modules</div>
<div class='t' style='left:15.7px;top:82px;font-size:16.0px;line-height:16.0px;font-weight:400;letter-spacing:0.972px;color:#479fd4;-webkit-text-stroke:0.35px currentColor;z-index:2;-webkit-text-stroke:0.5px currentColor;'>Prêts - Retours</div>
<div class='t' style='left:171.5px;top:82px;font-size:16.0px;line-height:16.0px;font-weight:400;letter-spacing:0.748px;color:#2d2d2d;-webkit-text-stroke:0.35px currentColor;z-index:2;'>Retours par lot</div>
<div class='t' style='left:322.75px;top:82px;font-size:16.0px;line-height:16.0px;font-weight:400;letter-spacing:0.784px;color:#2d2d2d;-webkit-text-stroke:0.35px currentColor;z-index:2;'>Réservations</div>
<div class='t' style='left:460.75px;top:82px;font-size:16.0px;line-height:16.0px;font-weight:400;letter-spacing:0.875px;color:#2d2d2d;-webkit-text-stroke:0.35px currentColor;z-index:2;'>Attribution des réservations</div>
<div class='t' style='left:714px;top:82px;font-size:16.0px;line-height:16.0px;font-weight:400;letter-spacing:1.164px;color:#2d2d2d;-webkit-text-stroke:0.35px currentColor;z-index:2;'>Prêts</div>
<div class='t' style='left:791.9px;top:82px;font-size:16.0px;line-height:16.0px;font-weight:400;letter-spacing:0.475px;color:#2d2d2d;-webkit-text-stroke:0.35px currentColor;z-index:2;'>Envoi de relances</div>
<div class='t' style='left:963.4px;top:82px;font-size:16.0px;line-height:16.0px;font-weight:400;letter-spacing:0.806px;color:#2d2d2d;-webkit-text-stroke:0.35px currentColor;z-index:2;'>Abonnés</div>
<div class='t' style='left:1066.4px;top:82px;font-size:16.0px;line-height:16.0px;font-weight:400;letter-spacing:0.896px;color:#2d2d2d;-webkit-text-stroke:0.35px currentColor;z-index:2;'>Regroupements</div>
<div class='t' style='left:1226.5px;top:82px;font-size:16.0px;line-height:16.0px;font-weight:400;letter-spacing:0.668px;color:#2d2d2d;-webkit-text-stroke:0.35px currentColor;z-index:2;'>Dettes &amp; Règlements</div>
<div class='t' style='left:97px;top:184px;font-size:18.0px;line-height:18.0px;font-weight:700;letter-spacing:0.994px;color:#fff;z-index:3;'>Prêt</div>
<div class='t' style='left:226.2px;top:184px;font-size:18.0px;line-height:18.0px;font-weight:400;letter-spacing:0.994px;color:#2d2d2d;-webkit-text-stroke:0.35px currentColor;z-index:3;'>Retour</div>
<div class='t' style='left:36.1px;top:261px;font-size:17.0px;line-height:17.0px;font-weight:400;letter-spacing:0.237px;color:#2d2d2d;-webkit-text-stroke:0.35px currentColor;z-index:3;'>Abonné</div>
<div class='t' style='left:207px;top:261px;font-size:17.0px;line-height:17.0px;font-weight:400;letter-spacing:0.532px;color:#2d2d2d;z-index:4;'>39489</div>
<div class='t' style='left:431px;top:261px;font-size:17.0px;line-height:17.0px;font-weight:400;letter-spacing:-0.276px;color:#2d2d2d;z-index:4;'>Valider</div>
<div class='t' style='left:35px;top:320px;font-size:17.0px;line-height:17.0px;font-weight:400;letter-spacing:0.107px;color:#2d2d2d;-webkit-text-stroke:0.35px currentColor;z-index:3;'>Exemplaire</div>
<div class='t' style='left:425.8px;top:320px;font-size:17.0px;line-height:17.0px;font-weight:400;letter-spacing:0.061px;color:#2d2d2d;z-index:4;'>Prêter</div>
<div class='t' style='left:852px;top:162px;font-size:18.0px;line-height:18.0px;font-weight:400;letter-spacing:0.971px;color:#479fd4;-webkit-text-stroke:0.35px currentColor;z-index:2;-webkit-text-stroke:0.5px currentColor;'>Informations abonné</div>
<div class='t' style='left:912.3px;top:192px;font-size:17.0px;line-height:17.0px;font-weight:700;letter-spacing:0.346px;color:#222;z-index:2;'>BEAUME</div>
<div class='t' style='left:988px;top:193px;font-size:17.0px;line-height:17.0px;font-weight:400;letter-spacing:-0.725px;color:#222;z-index:2;'>,</div>
<div class='t' style='left:997.5px;top:192px;font-size:17.0px;line-height:17.0px;font-weight:400;letter-spacing:1.509px;color:#222;z-index:2;'>Julie</div>
<div class='t' style='left:1074px;top:193px;font-size:14.0px;line-height:14.0px;font-weight:400;letter-spacing:0.377px;color:#333;z-index:2;'>(33 ans)</div>
<div class='t' style='left:905.3px;top:219px;font-size:17.0px;line-height:17.0px;font-weight:400;letter-spacing:1.066px;color:#222;z-index:2;'>Médiathèque John Lennon</div>
<div class='t' style='left:945.5px;top:288px;font-size:30.0px;line-height:30.0px;font-weight:700;letter-spacing:-4.088px;color:#fff;z-index:4;'>1</div>
<div class='t' style='left:894.6px;top:327px;font-size:14.0px;line-height:14.0px;font-weight:400;letter-spacing:0.35px;color:#fff;-webkit-text-stroke:0.35px currentColor;z-index:4;'>Réservation</div>
<div class='t' style='left:1090.8px;top:288px;font-size:30.0px;line-height:30.0px;font-weight:700;letter-spacing:0.43px;color:#fff;z-index:4;'>14</div>
<div class='t' style='left:1039.5px;top:327px;font-size:14.0px;line-height:14.0px;font-weight:400;letter-spacing:0.581px;color:#fff;-webkit-text-stroke:0.35px currentColor;z-index:4;'>Prêts</div>
<div class='t' style='left:1235.5px;top:288px;font-size:30.0px;line-height:30.0px;font-weight:700;letter-spacing:-1px;color:#fff;z-index:4;'>11</div>
<div class='t' style='left:1184.6px;top:327px;font-size:14.0px;line-height:14.0px;font-weight:400;letter-spacing:0.668px;color:#fff;-webkit-text-stroke:0.35px currentColor;z-index:4;'>Dettes</div>
<div class='t' style='left:1380.8px;top:288px;font-size:30.0px;line-height:30.0px;font-weight:700;letter-spacing:-6.287px;color:#fff;z-index:4;'>1</div>
<div class='t' style='left:1329.5px;top:327px;font-size:14.0px;line-height:14.0px;font-weight:400;letter-spacing:0.248px;color:#fff;-webkit-text-stroke:0.35px currentColor;z-index:4;'>Piège</div>
<div class='t' style='left:873.6px;top:391px;font-size:14.0px;line-height:14.0px;font-weight:700;letter-spacing:0.501px;color:#555;z-index:2;'>Cotisations :</div>
<div class='t' style='left:969px;top:391px;font-size:14.0px;line-height:14.0px;font-weight:400;letter-spacing:0.618px;color:#555;z-index:2;'>02 - Adulte ComCom (valide jusqu&#x27;au 03/09/2024, prix : 5.00)</div>
<div class='t' style='left:1644.3px;top:206px;font-size:16.0px;line-height:16.0px;font-weight:400;letter-spacing:0.36px;color:#2d2d2d;z-index:3;'>Voir regroupement</div>
<div class='t' style='left:1643.3px;top:264px;font-size:16.0px;line-height:16.0px;font-weight:400;letter-spacing:0.456px;color:#2d2d2d;z-index:3;'>Ré-afficher avertissements</div>
<div class='t' style='left:1643.3px;top:322px;font-size:16.0px;line-height:16.0px;font-weight:400;letter-spacing:0.356px;color:#2d2d2d;z-index:3;'>Envoyer situation par mail</div>
<div class='t' style='left:1643.3px;top:380px;font-size:16.0px;line-height:16.0px;font-weight:400;letter-spacing:0.304px;color:#2d2d2d;z-index:3;'>Modifier abonné</div>
<div class='t' style='left:56.5px;top:478px;font-size:16.0px;line-height:16.0px;font-weight:700;letter-spacing:0.41px;color:#fff;z-index:4;'>Réservations</div>
<div class='t' style='left:207.3px;top:478px;font-size:16.0px;line-height:16.0px;font-weight:400;letter-spacing:0.665px;color:#2d2d2d;-webkit-text-stroke:0.35px currentColor;z-index:4;'>Prêts en cours</div>
<div class='t' style='left:367.1px;top:478px;font-size:16.0px;line-height:16.0px;font-weight:400;letter-spacing:0.716px;color:#2d2d2d;-webkit-text-stroke:0.35px currentColor;z-index:4;'>Prêts numériques en cours</div>
<div class='t' style='left:65.3px;top:518px;font-size:17.0px;line-height:17.0px;font-weight:400;letter-spacing:0.973px;color:#222;-webkit-text-stroke:0.35px currentColor;z-index:6;'>Sur place :</div>
<div class='t' style='left:164.8px;top:518px;font-size:17.0px;line-height:17.0px;font-weight:400;letter-spacing:1.006px;color:#98ae47;-webkit-text-stroke:0.35px currentColor;z-index:6;'>1 disponible</div>
<div class='t' style='left:281.7px;top:518px;font-size:17.0px;line-height:17.0px;font-weight:400;letter-spacing:2.537px;color:#222;-webkit-text-stroke:0.35px currentColor;z-index:6;'>-</div>
<div class='t' style='left:299.3px;top:518px;font-size:17.0px;line-height:17.0px;font-weight:400;letter-spacing:1.527px;color:#222;-webkit-text-stroke:0.35px currentColor;z-index:6;'>6 en attente</div>
<div class='t' style='left:66.3px;top:545px;font-size:17.0px;line-height:17.0px;font-weight:400;letter-spacing:1.024px;color:#222;-webkit-text-stroke:0.35px currentColor;z-index:6;'>Ailleurs :</div>
<div class='t' style='left:166.7px;top:545px;font-size:17.0px;line-height:17.0px;font-weight:400;letter-spacing:1.169px;color:#222;-webkit-text-stroke:0.35px currentColor;z-index:6;'>0 disponible</div>
<div class='t' style='left:281.7px;top:545px;font-size:17.0px;line-height:17.0px;font-weight:400;letter-spacing:2.537px;color:#222;-webkit-text-stroke:0.35px currentColor;z-index:6;'>-</div>
<div class='t' style='left:299.3px;top:545px;font-size:17.0px;line-height:17.0px;font-weight:400;letter-spacing:1.473px;color:#222;-webkit-text-stroke:0.35px currentColor;z-index:6;'>2 en attente</div>
<div class='t' style='left:1036.25px;top:530px;font-size:17.0px;line-height:17.0px;font-weight:400;letter-spacing:-0.012px;color:#2d2d2d;z-index:7;'>Ajouter une réservation</div>
<div class='t' style='left:1285px;top:530px;font-size:17.0px;line-height:17.0px;font-weight:400;letter-spacing:-0.116px;color:#2d2d2d;z-index:7;'>Traitements par lot</div>
<div class='t' style='left:1481.8px;top:531px;font-size:17.0px;line-height:17.0px;font-weight:400;letter-spacing:-0.157px;color:#2d2d2d;z-index:7;'>Toutes les réservations</div>
<div class='t' style='left:1680px;top:531px;font-size:17.0px;line-height:17.0px;font-weight:400;letter-spacing:-0.057px;color:#2d2d2d;z-index:7;'>Afficher les imagettes</div>
<div class='t' style='left:111.5px;top:587px;font-size:16.0px;line-height:16.0px;font-weight:400;letter-spacing:0.52px;color:#2d2d2d;z-index:7;'>Outils</div>
<div class='t' style='left:364px;top:587px;font-size:16.0px;line-height:16.0px;font-weight:400;letter-spacing:0.68px;color:#2d2d2d;z-index:7;'>Etat</div>
<div class='t' style='left:443.8px;top:587px;font-size:16.0px;line-height:16.0px;font-weight:400;letter-spacing:0.488px;color:#2d2d2d;z-index:7;'>Site de retrait</div>
<div class='t' style='left:747.3px;top:587px;font-size:16.0px;line-height:16.0px;font-weight:400;letter-spacing:0.246px;color:#2d2d2d;z-index:7;'>Code exemplaire</div>
<div class='t' style='left:925.3px;top:587px;font-size:16.0px;line-height:16.0px;font-weight:400;letter-spacing:0.748px;color:#2d2d2d;z-index:7;'>Titre</div>
<div class='t' style='left:1329px;top:587px;font-size:16.0px;line-height:16.0px;font-weight:400;letter-spacing:0.312px;color:#2d2d2d;z-index:7;'>Public visé</div>
<div class='t' style='left:1480.3px;top:587px;font-size:16.0px;line-height:16.0px;font-weight:400;letter-spacing:0.537px;color:#2d2d2d;z-index:7;'>Localisation</div>
<div class='t' style='left:1622px;top:587px;font-size:16.0px;line-height:16.0px;font-weight:400;letter-spacing:0.343px;color:#2d2d2d;z-index:7;'>Date de demande</div>
<div class='t' style='left:1824.3px;top:587px;font-size:16.0px;line-height:16.0px;font-weight:400;letter-spacing:0.55px;color:#2d2d2d;z-index:7;width:16px;overflow:hidden;'>Da</div>
<div class='t' style='left:443.3px;top:632px;font-size:16.0px;line-height:16.0px;font-weight:400;letter-spacing:0.514px;color:#2d2d2d;z-index:8;'>Médiathèque John Lennon</div>
<div class='t' style='left:746.7px;top:632px;font-size:16.0px;line-height:16.0px;font-weight:400;letter-spacing:1.018px;color:#2d2d2d;z-index:8;'>C090078-</div>
<div class='t' style='left:982.5px;top:632px;font-size:16.0px;line-height:16.0px;font-weight:400;letter-spacing:0.02px;color:#f5402c;-webkit-text-stroke:0.35px currentColor;z-index:8;width:310px;overflow:hidden;'>SERIE SCOLAIRE (28) : Le petit navigateur</div>
<div class='t' style='left:1328.8px;top:632px;font-size:16.0px;line-height:16.0px;font-weight:400;letter-spacing:0.801px;color:#2d2d2d;z-index:8;'>Jeune</div>
<div class='t' style='left:1479.1px;top:632px;font-size:16.0px;line-height:16.0px;font-weight:400;letter-spacing:-0.108px;color:#2d2d2d;z-index:8;'>SIN - Langu…</div>
<div class='t' style='left:1620.6px;top:632px;font-size:16.0px;line-height:16.0px;font-weight:400;letter-spacing:1.213px;color:#2d2d2d;z-index:8;'>07/02/2024</div>
<div class='t' style='left:443.3px;top:670px;font-size:16.0px;line-height:16.0px;font-weight:400;letter-spacing:0.313px;color:#2d2d2d;z-index:8;'>Médiathèque Paul McCartney</div>
<div class='t' style='left:982.5px;top:670px;font-size:16.0px;line-height:16.0px;font-weight:400;letter-spacing:0.377px;color:#2d2d2d;-webkit-text-stroke:0.35px currentColor;z-index:8;'>Danielle Darrieux : Intégrale 1931-1951</div>
<div class='t' style='left:1620.6px;top:670px;font-size:16.0px;line-height:16.0px;font-weight:400;letter-spacing:1.547px;color:#2d2d2d;z-index:8;'>08/06/2022</div>
<div class='t' style='left:443.3px;top:708px;font-size:16.0px;line-height:16.0px;font-weight:400;letter-spacing:0.313px;color:#2d2d2d;z-index:8;'>Médiathèque Paul McCartney</div>
<div class='t' style='left:746.7px;top:708px;font-size:16.0px;line-height:16.0px;font-weight:400;letter-spacing:0.1px;color:#2d2d2d;z-index:8;'>C019015495C</div>
<div class='t' style='left:982.5px;top:708px;font-size:16.0px;line-height:16.0px;font-weight:400;letter-spacing:0.38px;color:#f7a21b;-webkit-text-stroke:0.35px currentColor;z-index:8;width:310px;overflow:hidden;'>L&#x27;Art des origines à nos jours Tome premier</div>
<div class='t' style='left:1328.8px;top:708px;font-size:16.0px;line-height:16.0px;font-weight:400;letter-spacing:0.567px;color:#2d2d2d;z-index:8;'>Adulte</div>
<div class='t' style='left:1620.6px;top:708px;font-size:16.0px;line-height:16.0px;font-weight:400;letter-spacing:1.547px;color:#2d2d2d;z-index:8;'>08/06/2022</div>
<div class='t' style='left:443.3px;top:746px;font-size:16.0px;line-height:16.0px;font-weight:400;letter-spacing:0.514px;color:#2d2d2d;z-index:8;'>Médiathèque John Lennon</div>
<div class='t' style='left:982.5px;top:746px;font-size:16.0px;line-height:16.0px;font-weight:400;letter-spacing:0.546px;color:#2d2d2d;-webkit-text-stroke:0.35px currentColor;z-index:8;'>Les chiens</div>
<div class='t' style='left:1620.6px;top:746px;font-size:16.0px;line-height:16.0px;font-weight:400;letter-spacing:0.902px;color:#2d2d2d;z-index:8;'>18/10/2023</div>
<div class='t' style='left:443.3px;top:784px;font-size:16.0px;line-height:16.0px;font-weight:400;letter-spacing:0.514px;color:#2d2d2d;z-index:8;'>Médiathèque John Lennon</div>
<div class='t' style='left:983.5px;top:784px;font-size:16.0px;line-height:16.0px;font-weight:400;letter-spacing:0.88px;color:#2d2d2d;-webkit-text-stroke:0.35px currentColor;z-index:8;'>01net 108 (06/04/2022) (Supplément)</div>
<div class='t' style='left:1620.6px;top:784px;font-size:16.0px;line-height:16.0px;font-weight:400;letter-spacing:0.723px;color:#2d2d2d;z-index:8;'>13/11/2023</div>
<div class='t' style='left:443.3px;top:822px;font-size:16.0px;line-height:16.0px;font-weight:400;letter-spacing:0.514px;color:#2d2d2d;z-index:8;'>Médiathèque John Lennon</div>
<div class='t' style='left:982.5px;top:822px;font-size:16.0px;line-height:16.0px;font-weight:400;letter-spacing:0.436px;color:#2d2d2d;-webkit-text-stroke:0.35px currentColor;z-index:8;'>Monsieur Chopin ou le voyage de la note</div>
<div class='t' style='left:1620.6px;top:822px;font-size:16.0px;line-height:16.0px;font-weight:400;letter-spacing:0.723px;color:#2d2d2d;z-index:8;'>15/11/2023</div>
<div class='t' style='left:443.3px;top:860px;font-size:16.0px;line-height:16.0px;font-weight:400;letter-spacing:0.514px;color:#2d2d2d;z-index:8;'>Médiathèque John Lennon</div>
<div class='t' style='left:982.5px;top:860px;font-size:16.0px;line-height:16.0px;font-weight:400;letter-spacing:0.606px;color:#2d2d2d;-webkit-text-stroke:0.35px currentColor;z-index:8;'>Des grenouilles sur le toit</div>
<div class='t' style='left:1620.6px;top:860px;font-size:16.0px;line-height:16.0px;font-weight:400;letter-spacing:0.902px;color:#2d2d2d;z-index:8;'>07/12/2023</div>
<div class='t' style='left:289.5px;top:678px;font-size:16.0px;line-height:16.0px;font-weight:400;letter-spacing:0.274px;color:#333;z-index:21;'>Prêter à l&#x27;abonné l&#x27;exemplaire</div>
<div class='t' style='left:289.5px;top:691px;font-size:16.0px;line-height:16.0px;font-weight:400;letter-spacing:0.947px;color:#333;z-index:21;'>attribué</div>
</body></html>
